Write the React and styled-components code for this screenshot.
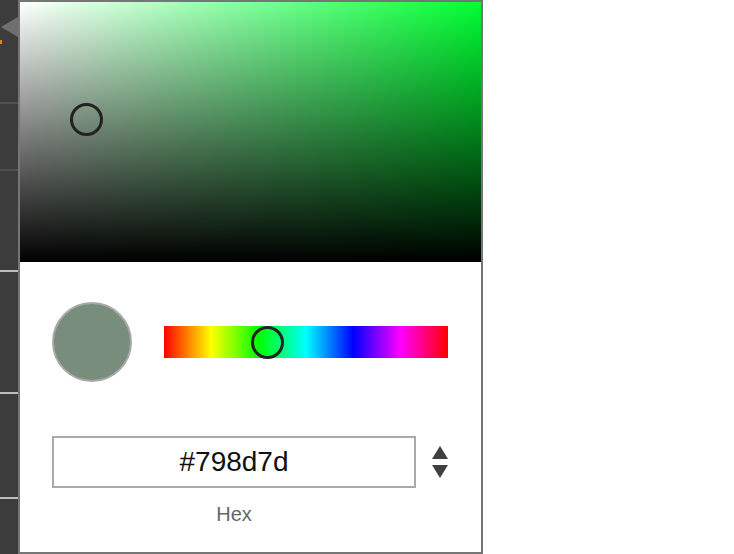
import styled, { createGlobalStyle } from "styled-components";

const HUE = 132;

const GlobalStyle = createGlobalStyle`
  html, body {
    margin: 0;
    padding: 0;
    background: #fff;
  }
  * {
    box-sizing: border-box;
  }
`;

const dividers = [
  { at: 102, color: "#4f4f4f" },
  { at: 169, color: "#4f4f4f" },
  { at: 270, color: "#bdbdbd" },
  { at: 392, color: "#bdbdbd" },
  { at: 497, color: "#bdbdbd" },
];

export default function App() {
  let last = 44;
  return (
    <Page>
      <GlobalStyle />
      <SideStrip>
        <Marker />
        {dividers.map((d) => {
          const gap = d.at - last;
          last = d.at + 2;
          return <Divider key={d.at} $gap={gap} $color={d.color} />;
        })}
      </SideStrip>
      <Popover>
        <Arrow />
        <SaturationArea $hue={HUE}>
          <Knob style={{ left: 66, top: 117 }} />
        </SaturationArea>
        <Controls>
          <SwatchRow>
            <Swatch $color="#798d7d" />
            <HueBar>
              <Knob style={{ left: 103, top: 16 }} />
            </HueBar>
          </SwatchRow>
          <InputRow>
            <Field>
              <HexInput readOnly value="#798d7d" />
              <FieldLabel>Hex</FieldLabel>
            </Field>
            <Spinner>
              <svg width="16" height="32" viewBox="0 0 16 32">
                <path d="M8 0 L16 13 L0 13 Z" fill="#3f3f3f" />
                <path d="M0 19 L16 19 L8 32 Z" fill="#3f3f3f" />
              </svg>
            </Spinner>
          </InputRow>
        </Controls>
      </Popover>
    </Page>
  );
}

const Page = styled.div`
  display: flex;
  height: 554px;
  font-family: "Liberation Sans", Arial, sans-serif;
`;

const SideStrip = styled.div`
  width: 18px;
  height: 554px;
  background: #3c3c3c;
  display: flex;
  flex-direction: column;
`;

const Marker = styled.div`
  width: 2px;
  height: 4px;
  margin-top: 40px;
  background: #f57c00;
`;

const Divider = styled.div`
  height: 2px;
  margin-top: ${(p) => p.$gap}px;
  background: ${(p) => p.$color};
`;

const Popover = styled.div`
  position: relative;
  width: 465px;
  height: 554px;
  border: 2px solid #757575;
  background: #fff;
  display: flex;
  flex-direction: column;
`;

const Arrow = styled.div`
  position: absolute;
  left: -19px;
  top: 15px;
  width: 0;
  height: 0;
  border-top: 10px solid transparent;
  border-bottom: 10px solid transparent;
  border-right: 17px solid #6f6f6f;
`;

const SaturationArea = styled.div`
  position: relative;
  height: 260px;
  flex-shrink: 0;
  background: linear-gradient(to top, #000, rgba(0, 0, 0, 0)),
    linear-gradient(to right, #fff, hsl(${(p) => p.$hue}, 100%, 50%));
`;

const Knob = styled.div`
  position: absolute;
  width: 33px;
  height: 33px;
  margin: -16px 0 0 -16px;
  border: 3px solid #222;
  border-radius: 50%;
`;

const Controls = styled.div`
  display: flex;
  flex-direction: column;
  padding: 40px 33px 0 32px;
`;

const SwatchRow = styled.div`
  display: flex;
  align-items: center;
  gap: 32px;
`;

const Swatch = styled.div`
  width: 80px;
  height: 80px;
  border-radius: 50%;
  background: ${(p) => p.$color};
  border: 2px solid #a9a9a9;
`;

const HueBar = styled.div`
  position: relative;
  width: 284px;
  height: 32px;
  background: linear-gradient(
    to right,
    #f00 0%,
    #ff0 16.66%,
    #0f0 33.33%,
    #0ff 50%,
    #00f 66.66%,
    #f0f 83.33%,
    #f00 100%
  );
`;

const InputRow = styled.div`
  display: flex;
  align-items: flex-start;
  gap: 16px;
  margin-top: 54px;
`;

const Field = styled.div`
  display: flex;
  flex-direction: column;
  align-items: center;
`;

const HexInput = styled.input`
  width: 364px;
  height: 52px;
  border: 2px solid #aaa;
  border-radius: 0;
  outline: none;
  text-align: center;
  font-family: "Liberation Sans", Arial, sans-serif;
  font-size: 28px;
  color: #111;
  background: #fff;
  padding: 0;
`;

const FieldLabel = styled.div`
  margin-top: 15px;
  font-size: 20px;
  color: #666;
`;

const Spinner = styled.div`
  display: flex;
  margin-top: 10px;
`;
